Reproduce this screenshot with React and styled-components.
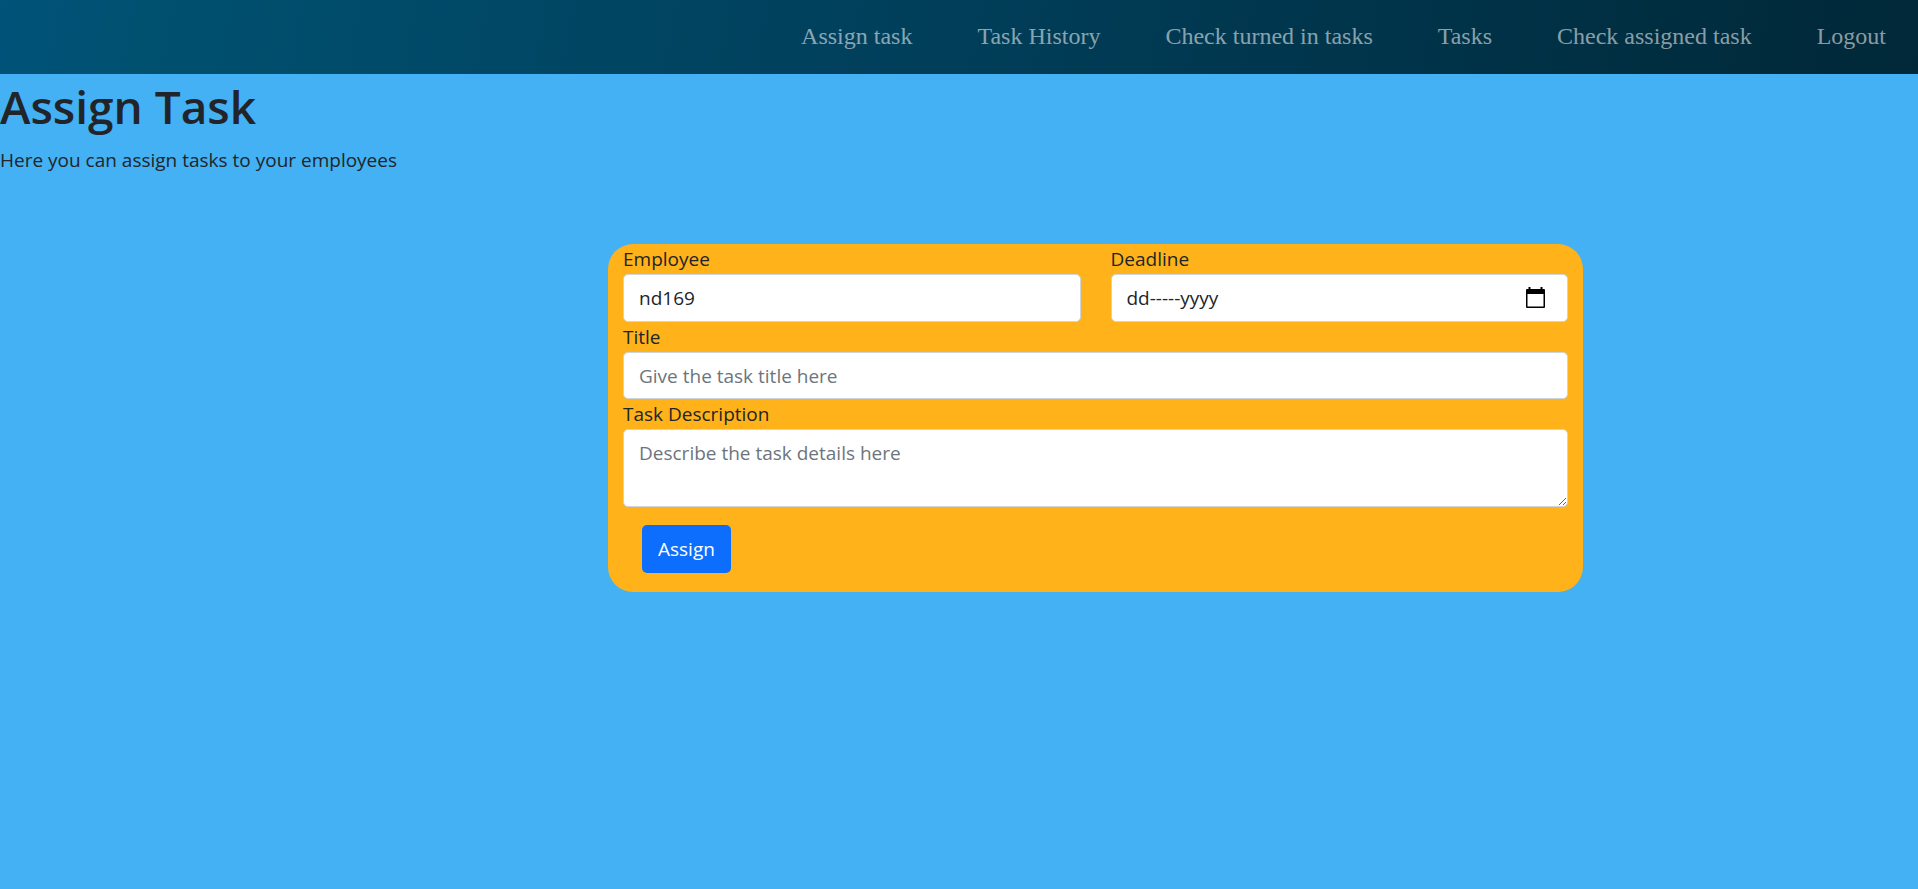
import React from "react";
import styled, { createGlobalStyle } from "styled-components";

const GlobalStyle = createGlobalStyle`
  *, *::before, *::after { box-sizing: border-box; }
  body {
    margin: 0;
    background: #43b1f3;
    color: #212529;
    font-family: "Segoe UI", "Open Sans", "Noto Sans", sans-serif;
    font-size: 19px;
    line-height: 30px;
  }
`;

const NavBar = styled.nav`
  display: flex;
  justify-content: flex-end;
  align-items: center;
  flex-wrap: wrap;
  min-height: 74px;
  padding: 0 32px 2px;
  background: linear-gradient(100deg, #005379 0%, #005070 8%, #003e59 50%, #002838 100%);
`;

const NavList = styled.ul`
  display: flex;
  flex-wrap: wrap;
  column-gap: 65px;
  margin: 0;
  padding: 0;
  list-style: none;
`;

const NavLink = styled.a`
  color: rgba(255, 255, 255, 0.55);
  font-family: "Times New Roman", "Liberation Serif", serif;
  font-size: 24px;
  line-height: 36px;
  text-decoration: none;
  &:hover { color: rgba(255, 255, 255, 0.75); }
`;

const Title = styled.h1`
  margin: 0 0 9px;
  padding-top: 2px;
  font-size: 46px;
  font-weight: 600;
  line-height: 60px;
`;

const Lead = styled.p`
  margin: 0;
`;

const Card = styled.form`
  width: calc(50% + 16px);
  margin: 69px 335px 0 auto;
  padding: 0 15px 19px;
  border-radius: 25px;
  background: #ffb21a;
`;

const Row = styled.div`
  display: flex;
  gap: 30px;
`;

const Field = styled.div`
  display: flex;
  flex-direction: column;
  flex: 1 1 0;
  min-width: 0;
`;

const Label = styled.label`
  line-height: 30px;
`;

const controlBox = `
  width: 100%;
  border: 1px solid #ced4da;
  border-radius: 5px;
  background: #fff;
`;

const controlText = `
  color: #212529;
  font: inherit;
  &::placeholder { color: #6c757d; opacity: 1; }
`;

const Input = styled.input`
  ${controlBox}
  ${controlText}
  height: ${(p) => (p.$compact ? 47 : 48)}px;
  padding: 0 15px;
`;

const TextArea = styled.textarea`
  ${controlBox}
  ${controlText}
  display: block;
  height: 78px;
  padding: 8px 15px;
  resize: vertical;
`;

const DateBox = styled.div`
  ${controlBox}
  display: flex;
  align-items: center;
  height: 48px;
  padding: 0 20px 0 15px;
`;

const DateInput = styled.input`
  ${controlText}
  flex: 1;
  min-width: 0;
  padding: 0;
  border: 0;
  outline: 0;
  background: none;
  &::placeholder { color: #212529; }
`;

const PickerButton = styled.button`
  display: flex;
  padding: 0;
  border: 0;
  background: none;
  cursor: pointer;
`;

const SubmitButton = styled.button`
  display: block;
  height: 48px;
  margin: 18px 0 0 19px;
  padding: 0 16px;
  border: 0;
  border-radius: 5px;
  background: #0d6efd;
  color: #fff;
  font: inherit;
  cursor: pointer;
`;

const CalendarIcon = () => (
  <svg width="23" height="24" viewBox="0 0 23 24" aria-hidden="true">
    <path
      fillRule="evenodd"
      d="M4.500 1H6.500V3H16.500V1H18.500V3H20Q21 3 21 4V21Q21 22 20 22H3Q2 22 2 21V4Q2 3 3 3H4.500ZM3.500 8V20.500H19.500V8Z"
    />
  </svg>
);

const links = [
  "Assign task",
  "Task History",
  "Check turned in tasks",
  "Tasks",
  "Check assigned task",
  "Logout",
];

export default function App() {
  return (
    <>
      <GlobalStyle />
      <NavBar>
        <NavList>
          {links.map((text) => (
            <li key={text}>
              <NavLink href="#">{text}</NavLink>
            </li>
          ))}
        </NavList>
      </NavBar>
      <main>
        <Title>Assign Task</Title>
        <Lead>Here you can assign tasks to your employees</Lead>
        <Card onSubmit={(e) => e.preventDefault()}>
          <Row>
            <Field>
              <Label htmlFor="employee">Employee</Label>
              <Input id="employee" type="text" defaultValue="nd169" />
            </Field>
            <Field>
              <Label htmlFor="deadline">Deadline</Label>
              <DateBox>
                <DateInput id="deadline" type="text" placeholder="dd-----yyyy" />
                <PickerButton type="button" aria-label="Pick a date">
                  <CalendarIcon />
                </PickerButton>
              </DateBox>
            </Field>
          </Row>
          <Field>
            <Label htmlFor="title">Title</Label>
            <Input $compact id="title" type="text" placeholder="Give the task title here" />
          </Field>
          <Field>
            <Label htmlFor="description">Task Description</Label>
            <TextArea id="description" placeholder="Describe the task details here" />
          </Field>
          <SubmitButton type="submit">Assign</SubmitButton>
        </Card>
      </main>
    </>
  );
}
